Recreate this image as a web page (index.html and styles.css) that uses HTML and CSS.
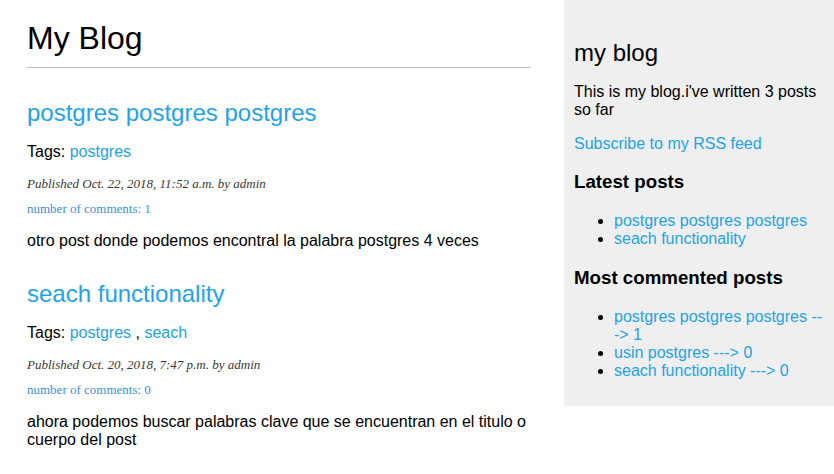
FILE: index.html
```html
<!DOCTYPE html>
<html>
<head>
<meta charset="utf-8">
<title>My Blog</title>
<link rel="stylesheet" href="styles.css">
</head>
<body>
<div class="page">
  <div class="content">
    <h1 class="site-title">My Blog</h1>
    <div class="post">
      <h2 class="post-title"><a href="#">postgres postgres postgres</a></h2>
      <p class="tags">Tags: <a href="#">postgres</a></p>
      <p class="date">Published Oct. 22, 2018, 11:52 a.m. by admin</p>
      <p class="comments"><a href="#">number of comments: 1</a></p>
      <p class="body-text">otro post donde podemos encontral la palabra postgres 4 veces</p>
    </div>
    <div class="post">
      <h2 class="post-title"><a href="#">seach functionality</a></h2>
      <p class="tags">Tags: <a href="#">postgres</a> , <a href="#">seach</a></p>
      <p class="date">Published Oct. 20, 2018, 7:47 p.m. by admin</p>
      <p class="comments"><a href="#">number of comments: 0</a></p>
      <p class="body-text">ahora podemos buscar palabras clave que se encuentran en el titulo o cuerpo del post</p>
    </div>
  </div>
  <div class="sidebar">
    <h2 class="side-title">my blog</h2>
    <p class="side-text">This is my blog.i've written 3 posts so far</p>
    <p class="side-text"><a href="#">Subscribe to my RSS feed</a></p>
    <h3 class="side-heading">Latest posts</h3>
    <ul class="side-list">
      <li><a href="#">postgres postgres postgres</a></li>
      <li><a href="#">seach functionality</a></li>
    </ul>
    <h3 class="side-heading">Most commented posts</h3>
    <ul class="side-list">
      <li><a href="#">postgres postgres postgres ---&gt; 1</a></li>
      <li><a href="#">usin postgres ---&gt; 0</a></li>
      <li><a href="#">seach functionality ---&gt; 0</a></li>
    </ul>
  </div>
</div>
</body>
</html>
```

FILE: styles.css
```css
body {
  margin: 0;
  padding: 0;
  font-family: "Liberation Sans", Arial, sans-serif;
  font-size: 16px;
  color: #000;
  background: #fff;
}
a {
  color: #22a3ea;
  text-decoration: none;
}
.page {
  display: flex;
  justify-content: space-between;
  align-items: flex-start;
}
.content {
  width: 503px;
  padding-left: 27px;
}
.site-title {
  font-size: 32px;
  font-weight: normal;
  margin: 20px 0 31px;
  padding-bottom: 10px;
  border-bottom: 1px solid #bbb;
}
.post-title {
  font-size: 24px;
  font-weight: normal;
  margin: 30px 0 0;
}
.tags {
  margin: 16px 0;
}
.date {
  font-family: "Liberation Serif", Georgia, serif;
  font-style: italic;
  font-size: 13px;
  line-height: 14px;
  color: #383838;
  margin: 16px 0 11px;
}
.comments {
  font-family: "Liberation Serif", Georgia, serif;
  font-size: 13px;
  line-height: 14px;
  margin: 11px 0 16px;
}
.comments a {
  color: #3a8fdc;
}
.body-text {
  margin: 16px 0;
}
.sidebar {
  width: 250px;
  padding: 10px 10px 7px;
  background: #efefef;
}
.side-title {
  font-size: 24px;
  font-weight: normal;
  margin: 29px 0 0;
}
.side-text {
  margin: 16px 0;
}
.side-heading {
  font-size: 18.72px;
  font-weight: bold;
  margin: 18px 0 19px;
}
.side-list {
  margin: 19px 0;
  padding-left: 40px;
}
```
